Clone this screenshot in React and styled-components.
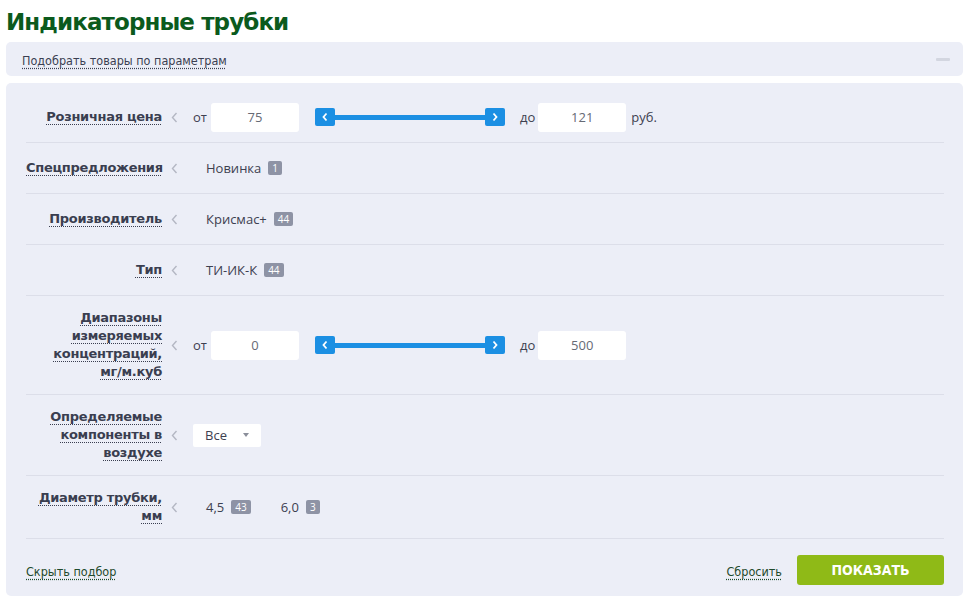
import styled, {createGlobalStyle} from 'styled-components'

const GlobalStyle = createGlobalStyle`
body{
  margin:0;
  background:#fff;
  font-family:"Open Sans", "DejaVu Sans", sans-serif;
}
`

const Page = styled.div`
width:957px;
padding-left:6px;
`

const Title = styled.h1`
margin:0;
height:42px;
line-height:44px;
font-family:"DejaVu Sans", Verdana, sans-serif;
font-size:23px;
font-weight:700;
color:#0b5a1d;
letter-spacing:-0.9px;
`

const Head = styled.div`
height:34px;
display:flex;
align-items:center;
justify-content:space-between;
padding:0 13px 0 16px;
background:#eceef7;
border-radius:5px;
margin-bottom:7px;
`

const NarrowLink = styled.a`
font-family:"Liberation Sans Narrow", "DejaVu Sans Condensed", sans-serif;
font-size:12.5px;
color:${p => p.green ? '#1f4a2c' : '#3b3f52'};
text-decoration:underline dotted;
text-underline-offset:3px;
cursor:pointer;
padding-top:2px;
`

const Dash = styled.span`
width:14px;
height:3px;
background:#d3d6e0;
border-radius:1px;
`

const Panel = styled.div`
background:#eceef7;
border-radius:5px;
padding:9px 19px 11px 20px;
`

const Row = styled.div`
box-sizing:border-box;
display:flex;
align-items:center;
min-height:51px;
padding:10px 0;
border-bottom:1px solid #dcdee9;
`

const Label = styled.div`
width:136px;
flex-shrink:0;
padding:3px 0 3px;
text-align:right;
font-family:"DejaVu Sans", Verdana, sans-serif;
font-size:13px;
font-weight:700;
line-height:18px;
letter-spacing:-0.3px;
color:#3a3e50;
span{
  text-decoration:underline dotted;
  text-underline-offset:3px;
  text-decoration-thickness:1px;
}
`

const Nowrap = styled.span`
white-space:nowrap;
`

const Chevron = styled.svg`
width:7px;
height:11px;
margin:0 15px 0 9px;
flex-shrink:0;
`

const Content = styled.div`
display:flex;
align-items:center;
font-size:13px;
color:#3d4050;
`

const Word = styled.span`
margin-right:${p => p.mr || 0}px;
`

const Input = styled.div`
width:88px;
height:29px;
background:#fff;
border-radius:3px;
display:flex;
align-items:center;
justify-content:center;
color:#666a75;
margin-right:${p => p.mr || 0}px;
`

const Slider = styled.div`
width:190px;
height:18px;
display:flex;
align-items:center;
margin-right:15px;
`

const Track = styled.div`
flex:1;
height:5px;
background:#1b8fe3;
`

const Handle = styled.div`
width:20px;
height:18px;
border-radius:2px;
background:#1b8fe3;
display:flex;
align-items:center;
justify-content:center;
`

const Value = styled.span`
display:flex;
align-items:center;
margin-left:${p => p.ml || 13}px;
`

const Badge = styled.span`
display:inline-block;
height:14px;
line-height:14px;
padding:0 4px;
margin-left:7px;
border-radius:2px;
background:#8e93a5;
color:#fff;
font-size:10px;
`

const Select = styled.div`
width:68px;
height:23px;
box-sizing:border-box;
background:#fff;
border-radius:2px;
display:flex;
align-items:center;
padding:0 12px;
justify-content:space-between;
`

const Caret = styled.span`
width:0;
height:0;
border-left:3.5px solid transparent;
border-right:3.5px solid transparent;
border-top:4px solid #8a8e9a;
`

const Footer = styled.div`
display:flex;
align-items:center;
padding-top:16px;
`

const Spacer = styled.div`
flex:1;
`

const Button = styled.button`
width:147px;
height:30px;
margin-left:15px;
border:none;
border-radius:3px;
background:#8fba17;
color:#fff;
font-family:"DejaVu Sans Condensed", "Liberation Sans Narrow", sans-serif;
font-size:14px;
font-weight:700;
cursor:pointer;
`

const Left = () => (
  <Chevron viewBox="0 0 7 11"><path d="M5.5 1 L1.5 5.5 L5.5 10" fill="none" stroke="#b4b7c3" strokeWidth="1.4"/></Chevron>
)

const Arrow = ({dir}) => (
  <svg width="8" height="10" viewBox="0 0 8 10">
    <path d={dir === 'l' ? 'M5.5 1.5 L2.5 5 L5.5 8.5' : 'M2.5 1.5 L5.5 5 L2.5 8.5'} fill="none" stroke="#fff" strokeWidth="1.8"/>
  </svg>
)

const Range = ({from, to, unit}) => (
  <Content>
    <Word mr={4}>от</Word>
    <Input mr={16}>{from}</Input>
    <Slider>
      <Handle><Arrow dir="l"/></Handle>
      <Track/>
      <Handle><Arrow dir="r"/></Handle>
    </Slider>
    <Word mr={3}>до</Word>
    <Input mr={5}>{to}</Input>
    {unit && <Word>{unit}</Word>}
  </Content>
)

export default function App(){
  return(
    <Page>
      <GlobalStyle/>
      <Title>Индикаторные трубки</Title>
      <Head>
        <NarrowLink>Подобрать товары по параметрам</NarrowLink>
        <Dash/>
      </Head>
      <Panel>
        <Row>
          <Label><span>Розничная цена</span></Label>
          <Left/>
          <Range from="75" to="121" unit="руб."/>
        </Row>
        <Row>
          <Label><span>Спецпредложения</span></Label>
          <Left/>
          <Content><Value>Новинка<Badge>1</Badge></Value></Content>
        </Row>
        <Row>
          <Label><span>Производитель</span></Label>
          <Left/>
          <Content><Value>Крисмас+<Badge>44</Badge></Value></Content>
        </Row>
        <Row>
          <Label><span>Тип</span></Label>
          <Left/>
          <Content><Value>ТИ-ИК-К<Badge>44</Badge></Value></Content>
        </Row>
        <Row>
          <Label><span>Диапазоны измеряемых концентраций, <Nowrap>мг/м.куб</Nowrap></span></Label>
          <Left/>
          <Range from="0" to="500"/>
        </Row>
        <Row>
          <Label><span>Определяемые компоненты в воздухе</span></Label>
          <Left/>
          <Content><Select>Все<Caret/></Select></Content>
        </Row>
        <Row>
          <Label><span>Диаметр трубки, мм</span></Label>
          <Left/>
          <Content>
            <Value>4,5<Badge>43</Badge></Value>
            <Value ml={30}>6,0<Badge>3</Badge></Value>
          </Content>
        </Row>
        <Footer>
          <NarrowLink green>Скрыть подбор</NarrowLink>
          <Spacer/>
          <NarrowLink green>Сбросить</NarrowLink>
          <Button>ПОКАЗАТЬ</Button>
        </Footer>
      </Panel>
    </Page>
  )
}
